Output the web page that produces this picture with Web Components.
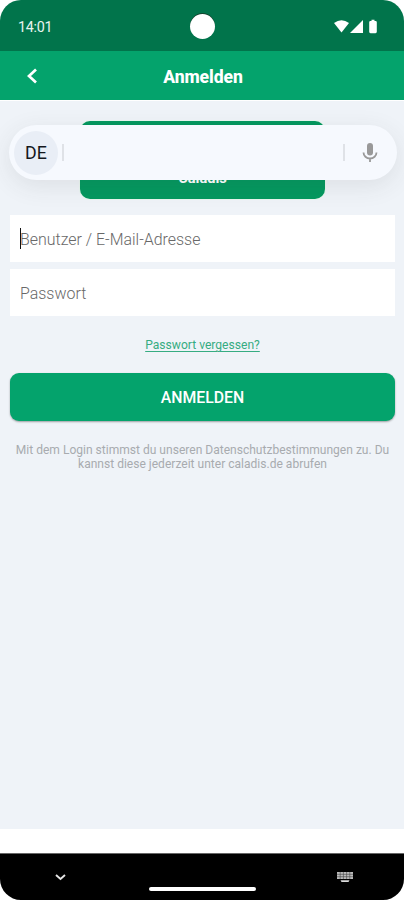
<!DOCTYPE html>
<html lang="de">
<head>
<meta charset="utf-8">
<title>Anmelden</title>
<style>
html,body{margin:0;background:#fff}
</style>
</head>
<body>
<login-screen></login-screen>
<script>
function define(name, markup) {
  const t = document.createElement('template');
  t.innerHTML = markup;
  customElements.define(name, class extends HTMLElement {
    constructor() {
      super();
      this.attachShadow({ mode: 'open' }).append(t.content.cloneNode(true));
    }
  });
}

define('status-bar', `
<style>
:host{display:flex;align-items:center;justify-content:space-between;height:51px;padding:3px 25px 0 18px;box-sizing:border-box;background:#01744b;color:#e9f5ef;font-size:14.3px;position:relative}
.cam{position:absolute;left:190px;top:14px;width:25px;height:25px;border-radius:50%;background:#fff;box-shadow:0 -1px 0 #14442f}
svg{display:block;margin-top:-1px}
.time{letter-spacing:-.25px}
</style>
<span class="time">14:01</span>
<div class="cam"></div>
<svg width="45" height="16" viewBox="0 0 45 16" fill="#fff"><path d="M0 4Q7.5-1.5 15 4L7.5 13.5Z"/><path d="M29 1v13H16Z"/><path d="M37.5 .8h3v1.2h1q1.3 0 1.3 1.3v9.5q0 1.4-1.3 1.4h-5q-1.3 0-1.3-1.4V3.3q0-1.3 1.3-1.3h1Z"/></svg>`);

define('app-bar', `
<style>
:host{display:grid;grid-template-columns:64px 1fr 64px;align-items:center;height:49px;background:#04a36c;color:#fff;font-weight:800;font-size:17.6px;text-align:center;border-bottom:1px solid #fff;box-sizing:content-box}
svg{margin-left:26px;display:block}
span{padding-top:3px;letter-spacing:-.1px;margin-left:2px}
</style>
<svg width="12" height="16" viewBox="0 0 12 16" fill="none" stroke="#fff" stroke-width="2.7"><path d="M10 1.5 3 8l7 6.5"/></svg>
<span><slot></slot></span>`);

define('logo-card', `
<style>
:host{display:flex;align-items:flex-end;justify-content:center;width:245px;height:78px;box-sizing:border-box;padding-bottom:11px;margin:0 auto;border-radius:10px;background:#04985f;color:#fff;font-weight:700;font-size:14.6px;line-height:20px;box-shadow:0 0 0 1px #e9f6f0}
</style><slot></slot>`);

define('input-toolbar', `
<style>
:host{position:absolute;left:9px;top:125px;width:388px;height:55px;box-sizing:border-box;display:flex;align-items:center;padding:0 19px 0 5px;border-radius:28px;background:#f6f9fe;box-shadow:0 6px 24px rgba(60,60,60,.1)}
.lang{width:44px;height:44px;border-radius:50%;background:#e9eef6;display:grid;place-items:center;color:#14171c;font-size:17.8px;letter-spacing:.2px}
i{width:2px;height:17px;background:#dfe2e7}
.a{margin-left:4px}.b{margin-left:auto;margin-right:17px}
</style>
<div class="lang"><slot></slot></div><i class="a"></i><i class="b"></i>
<svg width="16" height="20" viewBox="0 0 16 20"><rect x="5" y="0" width="6" height="12.5" rx="3" fill="#999"/><path d="M1.5 9.5a6.5 6 0 0 0 13 0M8 15.5V19" fill="none" stroke="#999" stroke-width="1.8"/></svg>`);

define('text-field', `
<style>
:host{display:flex;align-items:center;height:47px;padding:1px 10px 0;background:#fff;color:#686868;font-size:15.95px;font-weight:300;box-sizing:border-box;position:relative}
:host([focused])::before{content:"";position:absolute;left:9.5px;top:13px;width:1.5px;height:21px;background:#111}
</style><slot></slot>`);

define('text-link', `
<style>
:host{display:block;text-align:center;color:#36ac82;font-size:12.1px;line-height:16px;text-decoration:underline;text-decoration-thickness:1px;text-underline-offset:2px}
</style><slot></slot>`);

define('main-button', `
<style>
:host{display:grid;place-items:center;height:48px;padding-top:1px;box-sizing:border-box;border-radius:9px;background:#04a36c;color:#fff;font-weight:500;font-size:15.8px;box-shadow:0 1px 2px rgba(0,0,0,.35)}
</style><slot></slot>`);

define('legal-note', `
<style>
:host{display:block;text-align:center;color:#a8abaf;font-size:12.06px;line-height:14px;white-space:nowrap}
</style><slot></slot>`);

define('nav-bar', `
<style>
:host{display:grid;grid-template-columns:1fr 107px 1fr;height:47px;background:#000;border-top:1px solid #666;box-sizing:border-box}
.bar{align-self:end;height:4px;margin-bottom:9px;border-radius:2px;background:#fff}
.l{margin:19px 0 0 54px}.r{margin:18px 0 0 80px}
</style>
<svg class="l" width="13" height="10" viewBox="0 0 13 10" fill="none" stroke="#e5e5e5" stroke-width="1.9"><path d="M2 2l4.5 4L11 2"/></svg>
<div class="bar"></div>
<svg class="r" width="18" height="11" viewBox="0 0 18 11"><path d="M1 0h16v7H1z" fill="#bbb"/><path d="M1 2.3h16M1 4.7h16M4.2 0v7M7.4 0v7M10.6 0v7M13.8 0v7" stroke="#444" stroke-width=".6"/><path d="M4.5 8.3h9l-1 1.7h-7z" fill="#ddd"/></svg>`);

define('login-screen', `
<style>
:host{display:flex;flex-direction:column;width:404px;height:900px;overflow:hidden;position:relative;border-radius:21px;background:#fff;font-family:Roboto,sans-serif}
main{height:728px;box-sizing:border-box;padding:20px 9px 0 10px;background:#eff3f8}
nav-bar{margin-top:auto}
.fields{display:grid;gap:7px;margin-top:16px}
text-link{margin-top:21px}
main-button{margin-top:20px}
legal-note{margin-top:22px}
</style>
<status-bar></status-bar>
<app-bar>Anmelden</app-bar>
<main>
<logo-card>Caladis</logo-card>
<div class="fields"><text-field focused>Benutzer / E-Mail-Adresse</text-field><text-field>Passwort</text-field></div>
<text-link>Passwort vergessen?</text-link>
<main-button>ANMELDEN</main-button>
<legal-note>Mit dem Login stimmst du unseren Datenschutzbestimmungen zu. Du<br>kannst diese jederzeit unter caladis.de abrufen</legal-note>
</main>
<input-toolbar>DE</input-toolbar>
<nav-bar></nav-bar>`);
</script>
</body>
</html>
